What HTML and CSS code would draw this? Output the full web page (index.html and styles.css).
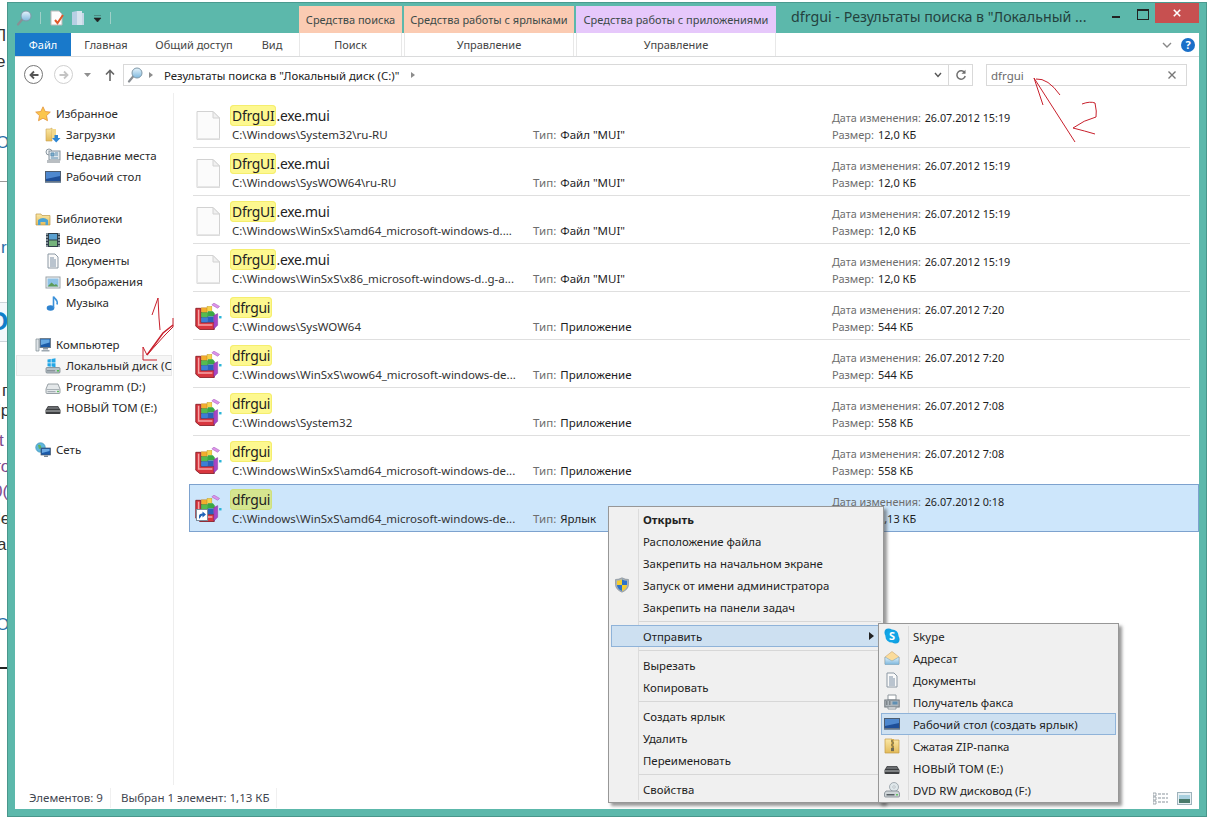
FILE: index.html
```html
<!DOCTYPE html>
<html lang="ru">
<head>
<meta charset="utf-8">
<title>dfrgui</title>
<link rel="stylesheet" href="styles.css">
</head>
<body>
<svg class="defs" width="0" height="0">
  <defs>
    <linearGradient id="gb" x1="0" y1="0" x2="0" y2="1"><stop offset="0" stop-color="#e6f4fc"/><stop offset="1" stop-color="#7db7dd"/></linearGradient>
    <linearGradient id="gf" x1="0" y1="0" x2="0" y2="1"><stop offset="0" stop-color="#fbe8a6"/><stop offset="1" stop-color="#e3bb5a"/></linearGradient>
    <symbol id="i-mag" viewBox="0 0 16 16"><path d="M6.500 9 2 14.500" stroke="#8a8f94" stroke-width="2.200" stroke-linecap="round"/><circle cx="10" cy="6" r="5" fill="url(#gb)" stroke="#7f98a8"/></symbol>
    <symbol id="i-qdoc" viewBox="0 0 16 16"><path d="M2 1h8l3 3v11H2z" fill="#fdfdfd" stroke="#b9b9b9"/><path d="M6 10l2.500 3L14 5" fill="none" stroke="#e0592a" stroke-width="2"/></symbol>
    <symbol id="i-qfold" viewBox="0 0 16 16"><path d="M2 2l5-1v14H2z" fill="#b7cfe4"/><path d="M7 1h5v14H7z" fill="#d7e4ef"/><path d="M12 3h2v12h-2z" fill="#c5d6e6"/></symbol>
    <symbol id="i-star" viewBox="0 0 16 16"><path d="M8 .8l2.200 4.700 5.100.6-3.800 3.500 1 5.100L8 12.200l-4.500 2.500 1-5.100L.7 6.100l5.100-.6z" fill="#fbc64e" stroke="#e2923a" stroke-width=".8"/></symbol>
    <symbol id="i-dl" viewBox="0 0 16 16"><path d="M1 2h4l2-1v13H1z" fill="url(#gf)" stroke="#c9a150" stroke-width=".6"/><path d="M7 2h4v9H7z" fill="#f3d98b"/><path d="M9.500 8h3.500v3h2.500l-4.300 4.500L7 11h2.500z" fill="#2d86d3"/></symbol>
    <symbol id="i-rec" viewBox="0 0 16 16"><circle cx="4" cy="4" r="3" fill="#f2f5f7" stroke="#8c98a1"/><rect x="4" y="3" width="11" height="9" fill="#dfe7ec" stroke="#87949d"/><path d="M6 5h3v3H6zM10 5h3M10 7h3M6 10h7" stroke="#5f90b2" fill="#7fb0d0"/><path d="M2 12h13v3H2z" fill="#b9bec2"/></symbol>
    <symbol id="i-desk" viewBox="0 0 16 16"><rect x=".5" y="2.500" width="15" height="10" fill="#1e4f99" stroke="#4d5d70"/><path d="M1 3h14v4L1 10z" fill="#4e88cf"/><path d="M0 12.500h16v1.500H0z" fill="#7c8fa3"/></symbol>
    <symbol id="i-lib" viewBox="0 0 16 16"><path d="M1 3h5l1 1.500h8V14H1z" fill="url(#gf)" stroke="#bd9a4c" stroke-width=".7"/><path d="M3 14V9q5-4 10 0v5h-2.500v-3h-5v3z" fill="#4aa3d4"/></symbol>
    <symbol id="i-vid" viewBox="0 0 16 16"><rect x="1" y="1" width="14" height="14" fill="#2f3e4a"/><path d="M1 2h2M1 5h2M1 8h2M1 11h2M1 14h2M13 2h2M13 5h2M13 8h2M13 11h2M13 14h2" stroke="#dce3e8"/><rect x="4" y="2" width="8" height="5.500" fill="#5aa0d0"/><rect x="4" y="8.500" width="8" height="5.500" fill="#75b37c"/></symbol>
    <symbol id="i-docs" viewBox="0 0 16 16"><path d="M3 1h7l3 3v11H3z" fill="#fafafa" stroke="#8c98a3"/><path d="M5 5h4M5 7h6M5 9h6M5 11h6M5 13h6" stroke="#7a8ea3"/></symbol>
    <symbol id="i-img" viewBox="0 0 16 16"><rect x="1" y="3" width="14" height="11" fill="#f4f4f4" stroke="#9aa3aa"/><rect x="2.500" y="4.500" width="11" height="8" fill="#8ec2e6"/><path d="M2.500 12.500l4-4 3 2.500 1.500-1 2.500 2.500z" fill="#5d9b58"/></symbol>
    <symbol id="i-mus" viewBox="0 0 16 16"><ellipse cx="5.500" cy="13" rx="3.800" ry="2.800" fill="#2f83cf"/><path d="M8.500 13V1.500c1 2.500 5 3 3.500 8" fill="none" stroke="#3d92da" stroke-width="1.600"/></symbol>
    <symbol id="i-comp" viewBox="0 0 16 16"><rect x="5" y="1.500" width="10.500" height="9" fill="#1c5ca8" stroke="#70808f"/><path d="M6 2.500h8.500v3L6 8z" fill="#67a9e2"/><rect x="8" y="11" width="5" height="1.500" fill="#8d99a3"/><path d="M1 2h3v12H1z" fill="#dfe4e8" stroke="#7d8991" stroke-width=".7"/><path d="M6.500 13h8v1.500h-8z" fill="#9ea8b0"/></symbol>
    <symbol id="i-c" viewBox="0 0 16 16"><path d="M1 10.500q0-1 1-1h12q1 0 1 1v3.500q0 1-1 1H2q-1 0-1-1z" fill="#b9c3c9" stroke="#6f7a82" stroke-width=".7"/><path d="M2 12h8v1.500H2z" fill="#8a949b"/><rect x="12" y="12" width="2" height="1.500" fill="#4bc34b"/><path d="M2.500 1.500l3.300-.5v3.500H2.500zM6.500 1l4-.7v4.200h-4zM2.500 5.200h3.300v3.500l-3.300-.5zM6.500 5.200h4v4l-4-.6z" fill="#22a6e6"/></symbol>
    <symbol id="i-d" viewBox="0 0 16 16"><path d="M3 5h10l2 5v3.500q0 1-1 1H2q-1 0-1-1V10z" fill="#e4e8ea" stroke="#848d93" stroke-width=".8"/><path d="M1.500 10.500h13" stroke="#a9b1b6"/><path d="M2.500 12h8v1.200h-8z" fill="#a5aeb4"/><rect x="12" y="11.800" width="2" height="1.400" fill="#5fc25f"/></symbol>
    <symbol id="i-e" viewBox="0 0 16 16"><path d="M3 6h10l2.500 4v3q0 1-1 1H1.500q-1 0-1-1v-3z" fill="#3d3f41"/><path d="M1 11h14" stroke="#bfc3c5"/><path d="M3.500 6.500h9L14 9H2z" fill="#6a6d70"/></symbol>
    <symbol id="i-net" viewBox="0 0 16 16"><circle cx="5.500" cy="5.500" r="4.800" fill="#5fb6dc" stroke="#3a8fb5" stroke-width=".6"/><path d="M3 3q2-1 3 1t-2 3zM7 8q2-1 2.500 1" fill="#64b35a"/><rect x="6" y="6" width="9.500" height="7" fill="#1b5aa9" stroke="#47586a" stroke-width=".7"/><path d="M7 7h7.500v2L7 11z" fill="#6aa9e4"/><path d="M9 13.500h4V15H9z" fill="#7e8a94"/></symbol>
    <symbol id="i-file" viewBox="0 0 24 29"><path d="M1 .5h16l6.500 6.500v21.500H1z" fill="#fbfbfb" stroke="#d2d2d2"/><path d="M17 .5V7h6.500z" fill="#f0f0f0" stroke="#d2d2d2"/><path d="M1 27h22.500v1.500H1z" fill="#e6e6e6"/></symbol>
    <symbol id="i-defrag" viewBox="0 0 28 28">
      <path d="M.8 5.500h5.200V20h14v7.500H5L.8 24z" fill="#d8363f" stroke="#7c1018" stroke-width=".8"/>
      <path d="M3 7h1.500v15H18v1.500H3z" fill="#f6a4a6"/>
      <rect x="6.500" y="5" width="6" height="5" fill="#f3ad2d" stroke="#b77c15" stroke-width=".4"/><rect x="12.500" y="3.500" width="5" height="5" fill="#f7d24a" stroke="#b9961f" stroke-width=".4"/>
      <rect x="6.500" y="10" width="7" height="5" fill="#55bc50" stroke="#2d7d2a" stroke-width=".4"/><path d="M13.500 8.500h5l2 2.500v3h-7z" fill="#3aa845"/>
      <rect x="6.500" y="15" width="6.500" height="5" fill="#3a7fd8" stroke="#1f4f95" stroke-width=".4"/><rect x="13" y="14" width="6.500" height="6" fill="#2a62bb"/>
      <path d="M19.500 13l4-2v12l-4 4z" fill="#a845c6" stroke="#6e2a85" stroke-width=".4"/>
      <path d="M17.500 2l2-2 6 3.500-2 2z" fill="#dc93ea" stroke="#9c52b3" stroke-width=".5"/><rect x="25" y="13.500" width="2.500" height="2.500" fill="#2ab5d8"/>
    </symbol>
    <symbol id="i-lnk" viewBox="0 0 12 12"><rect x=".5" y=".5" width="11" height="11" fill="#fff" stroke="#7d8b99"/><path d="M3 10V7q0-2.500 3.500-2.500V2.500L10 5.500 6.500 8.500v-2Q5 6.500 4.800 8z" fill="#1d62b8"/></symbol>
    <symbol id="i-shield" viewBox="0 0 16 16"><path d="M8 .8q3 1.700 6.500 1.700v5q0 5-6.500 7.700Q1.500 12.500 1.500 7.500v-5Q5 2.500 8 .8z" fill="#aab3bb" stroke="#7b858d" stroke-width=".6"/><path d="M8 2.500q2.500 1.200 5 1.300V8H8zM8 8v6q-4.700-2-5-6z" fill="#2d72c9"/><path d="M8 2.500V8H3V3.800q2.500-.1 5-1.300zM8 8h5q-.3 4-5 6z" fill="#f4cc2f"/></symbol>
    <symbol id="i-skype" viewBox="0 0 16 16"><circle cx="4.500" cy="4.500" r="4" fill="#0f9fe0"/><circle cx="11.500" cy="11.500" r="4" fill="#0f9fe0"/><circle cx="8" cy="8" r="6.600" fill="#12a5e6"/><text x="8" y="12" text-anchor="middle" class="skype-s">S</text></symbol>
    <symbol id="i-mail" viewBox="0 0 16 16"><path d="M1 7l7-5.500L15 7v7H1z" fill="#fbdc9b" stroke="#c9a670" stroke-width=".6"/><path d="M1 7l7 4 7-4v7.500H1z" fill="url(#gb)" stroke="#7ba6c4" stroke-width=".6"/></symbol>
    <symbol id="i-fax" viewBox="0 0 16 16"><path d="M4 1h8v5H4z" fill="#fff" stroke="#8f979d"/><rect x=".8" y="6" width="14.400" height="7" fill="#aeb6bc" stroke="#6f777d"/><path d="M2 8h1.500M2 10h1.500M5 8h1.500M5 10h1.500" stroke="#4c545a"/><rect x="8.500" y="7.500" width="5" height="3" fill="#5f8fb3"/><path d="M4 13h8v2H4z" fill="#fff" stroke="#8f979d"/></symbol>
    <symbol id="i-zip" viewBox="0 0 16 16"><path d="M1 1h7l1 1h6v13H1z" fill="url(#gf)" stroke="#c49b45" stroke-width=".7"/><path d="M7 1h3v14H7z" fill="#d6b052"/><path d="M8 2v2M9 4v2M8 6v2M9 8v2" stroke="#5f5a44"/><rect x="7" y="10" width="3" height="3" fill="#6e6a55"/></symbol>
    <symbol id="i-dvd" viewBox="0 0 16 16"><circle cx="10" cy="5" r="4.500" fill="#dfe7ea" stroke="#85919a" stroke-width=".7"/><circle cx="10" cy="5" r="1.200" fill="#fff" stroke="#85919a" stroke-width=".5"/><path d="M2 9h12l1.500 2v3q0 1-1 1h-13q-1 0-1-1v-3z" fill="#cfd5d8" stroke="#6f7a82" stroke-width=".7"/><path d="M2.500 12h8v1.500h-8z" fill="#555d63"/><rect x="12" y="12" width="2" height="1.500" fill="#63c563"/></symbol>
  </defs>
</svg>

<div class="stage">
  <div class="behind">
    <span class="frag f1">Л</span>
    <span class="frag f2">е</span>
    <span class="frag f3 link">От</span>
    <span class="rule r1"></span>
    <span class="frag f4 link">r</span>
    <span class="bluebox"><span class="big-o">О</span></span>
    <span class="frag f5">г</span>
    <span class="frag f6">lp</span>
    <span class="frag f7 visited">t</span>
    <span class="frag f8 visited">го</span>
    <span class="frag f9 visited">0(</span>
    <span class="frag f10">le</span>
    <span class="frag f11">а</span>
    <span class="frag f12 link">От</span>
    <span class="rule r2"></span>
  </div>

  <div class="window">
    <header class="titlebar">
      <div class="qat">
        <svg class="ico16 qat-mag"><use href="#i-mag"/></svg>
        <i class="qat-sep"></i>
        <svg class="ico16"><use href="#i-qdoc"/></svg>
        <svg class="ico16"><use href="#i-qfold"/></svg>
        <svg class="qat-drop" viewBox="0 0 9 7"><path d="M1 0h7M1 3h7l-3.500 4z" fill="#222" stroke="#222" stroke-width=".6"/></svg>
        <i class="qat-sep"></i>
      </div>
      <div class="ctx-heads">
        <span class="ctx-head search">Средства поиска</span>
        <span class="ctx-head shortcut">Средства работы с ярлыками</span>
        <span class="ctx-head app">Средства работы с приложениями</span>
      </div>
      <div class="win-title">dfrgui - Результаты поиска в "Локальный ...</div>
      <div class="win-btns">
        <span class="wb wb-min"></span>
        <span class="wb wb-max"></span>
        <span class="wb wb-close"><svg viewBox="0 0 10 10" class="wb-x"><path d="M1 1l8 8M9 1l-8 8" stroke="#fff" stroke-width="2"/></svg></span>
      </div>
    </header>

    <nav class="ribbon">
      <span class="tab-file">Файл</span>
      <span class="tab t-home">Главная</span>
      <span class="tab t-share">Общий доступ</span>
      <span class="tab t-view">Вид</span>
      <span class="tab ctx t-search">Поиск</span>
      <span class="tab ctx t-short">Управление</span>
      <span class="tab ctx t-app">Управление</span>
      <span class="ribbon-end">
        <svg class="chev" viewBox="0 0 10 6"><path d="M1 1l4 4 4-4" fill="none" stroke="#888" stroke-width="1.400"/></svg>
        <span class="help">?</span>
      </span>
    </nav>

    <div class="navbar">
      <span class="round active"><svg viewBox="0 0 12 12"><path d="M10.500 6H2.500M6 2.500L2.500 6 6 9.500" fill="none" stroke="#555" stroke-width="1.800"/></svg></span>
      <span class="round"><svg viewBox="0 0 12 12"><path d="M1.500 6h8M6 2.500L9.500 6 6 9.500" fill="none" stroke="#c4c4c4" stroke-width="1.800"/></svg></span>
      <svg class="nav-drop" viewBox="0 0 7 4"><path d="M0 0h7L3.500 4z" fill="#8f8f8f"/></svg>
      <svg class="nav-up" viewBox="0 0 10 12"><path d="M5 12V1.500M1 5.500l4-4 4 4" fill="none" stroke="#666" stroke-width="1.600"/></svg>
      <div class="addr">
        <svg class="ico16 addr-mag"><use href="#i-mag"/></svg>
        <i class="tri"></i>
        <span class="addr-text">Результаты поиска в "Локальный диск (C:)"</span>
        <i class="tri"></i>
        <span class="addr-space"></span>
        <svg class="addr-chev" viewBox="0 0 8 6"><path d="M1 1l3 3.500L7 1" fill="none" stroke="#555" stroke-width="1.400"/></svg>
        <span class="addr-refresh"><svg viewBox="0 0 12 12"><path d="M9.800 4A4.200 4.200 0 1 0 10.200 7" fill="none" stroke="#6f6f6f" stroke-width="1.500"/><path d="M10.500 .8v4h-4z" fill="#6f6f6f"/></svg></span>
      </div>
      <div class="searchbox">
        <span>dfrgui</span>
        <svg viewBox="0 0 8 8"><path d="M.5.500l7 7M7.500.500l-7 7" stroke="#777" stroke-width="1.400"/></svg>
      </div>
    </div>

    <main class="main">
      <aside class="pane">
        <div class="group">
          <div class="pi top"><svg class="ico16"><use href="#i-star"/></svg><span>Избранное</span></div>
          <div class="pi sub"><svg class="ico16"><use href="#i-dl"/></svg><span>Загрузки</span></div>
          <div class="pi sub"><svg class="ico16"><use href="#i-rec"/></svg><span>Недавние места</span></div>
          <div class="pi sub"><svg class="ico16"><use href="#i-desk"/></svg><span>Рабочий стол</span></div>
        </div>
        <div class="group">
          <div class="pi top"><svg class="ico16"><use href="#i-lib"/></svg><span>Библиотеки</span></div>
          <div class="pi sub"><svg class="ico16"><use href="#i-vid"/></svg><span>Видео</span></div>
          <div class="pi sub"><svg class="ico16"><use href="#i-docs"/></svg><span>Документы</span></div>
          <div class="pi sub"><svg class="ico16"><use href="#i-img"/></svg><span>Изображения</span></div>
          <div class="pi sub"><svg class="ico16"><use href="#i-mus"/></svg><span>Музыка</span></div>
        </div>
        <div class="group">
          <div class="pi top"><svg class="ico16"><use href="#i-comp"/></svg><span>Компьютер</span></div>
          <div class="pi sub sel"><svg class="ico16"><use href="#i-c"/></svg><span>Локальный диск (C:)</span></div>
          <div class="pi sub"><svg class="ico16"><use href="#i-d"/></svg><span>Programm (D:)</span></div>
          <div class="pi sub"><svg class="ico16"><use href="#i-e"/></svg><span>НОВЫЙ ТОМ (E:)</span></div>
        </div>
        <div class="group">
          <div class="pi top"><svg class="ico16"><use href="#i-net"/></svg><span>Сеть</span></div>
        </div>
      </aside>

      <section class="list">
        <article class="row">
          <svg class="ficon doc"><use href="#i-file"/></svg>
          <div class="fname"><mark>DfrgUI</mark>.exe.mui</div>
          <div class="fpath">C:\Windows\System32\ru-RU</div>
          <div class="ftype"><span class="lbl">Тип:</span> Файл "MUI"</div>
          <div class="fdate"><span class="lbl">Дата изменения:</span> 26.07.2012 15:19</div>
          <div class="fsize"><span class="lbl">Размер:</span> 12,0 КБ</div>
        </article>
        <hr class="sep">
        <article class="row">
          <svg class="ficon doc"><use href="#i-file"/></svg>
          <div class="fname"><mark>DfrgUI</mark>.exe.mui</div>
          <div class="fpath">C:\Windows\SysWOW64\ru-RU</div>
          <div class="ftype"><span class="lbl">Тип:</span> Файл "MUI"</div>
          <div class="fdate"><span class="lbl">Дата изменения:</span> 26.07.2012 15:19</div>
          <div class="fsize"><span class="lbl">Размер:</span> 12,0 КБ</div>
        </article>
        <hr class="sep">
        <article class="row">
          <svg class="ficon doc"><use href="#i-file"/></svg>
          <div class="fname"><mark>DfrgUI</mark>.exe.mui</div>
          <div class="fpath">C:\Windows\WinSxS\amd64_microsoft-windows-d....</div>
          <div class="ftype"><span class="lbl">Тип:</span> Файл "MUI"</div>
          <div class="fdate"><span class="lbl">Дата изменения:</span> 26.07.2012 15:19</div>
          <div class="fsize"><span class="lbl">Размер:</span> 12,0 КБ</div>
        </article>
        <hr class="sep">
        <article class="row">
          <svg class="ficon doc"><use href="#i-file"/></svg>
          <div class="fname"><mark>DfrgUI</mark>.exe.mui</div>
          <div class="fpath">C:\Windows\WinSxS\x86_microsoft-windows-d..g-a...</div>
          <div class="ftype"><span class="lbl">Тип:</span> Файл "MUI"</div>
          <div class="fdate"><span class="lbl">Дата изменения:</span> 26.07.2012 15:19</div>
          <div class="fsize"><span class="lbl">Размер:</span> 12,0 КБ</div>
        </article>
        <hr class="sep">
        <article class="row">
          <svg class="ficon app"><use href="#i-defrag"/></svg>
          <div class="fname"><mark>dfrgui</mark></div>
          <div class="fpath">C:\Windows\SysWOW64</div>
          <div class="ftype"><span class="lbl">Тип:</span> Приложение</div>
          <div class="fdate"><span class="lbl">Дата изменения:</span> 26.07.2012 7:20</div>
          <div class="fsize"><span class="lbl">Размер:</span> 544 КБ</div>
        </article>
        <hr class="sep">
        <article class="row">
          <svg class="ficon app"><use href="#i-defrag"/></svg>
          <div class="fname"><mark>dfrgui</mark></div>
          <div class="fpath">C:\Windows\WinSxS\wow64_microsoft-windows-de...</div>
          <div class="ftype"><span class="lbl">Тип:</span> Приложение</div>
          <div class="fdate"><span class="lbl">Дата изменения:</span> 26.07.2012 7:20</div>
          <div class="fsize"><span class="lbl">Размер:</span> 544 КБ</div>
        </article>
        <hr class="sep">
        <article class="row">
          <svg class="ficon app"><use href="#i-defrag"/></svg>
          <div class="fname"><mark>dfrgui</mark></div>
          <div class="fpath">C:\Windows\System32</div>
          <div class="ftype"><span class="lbl">Тип:</span> Приложение</div>
          <div class="fdate"><span class="lbl">Дата изменения:</span> 26.07.2012 7:08</div>
          <div class="fsize"><span class="lbl">Размер:</span> 558 КБ</div>
        </article>
        <hr class="sep">
        <article class="row">
          <svg class="ficon app"><use href="#i-defrag"/></svg>
          <div class="fname"><mark>dfrgui</mark></div>
          <div class="fpath">C:\Windows\WinSxS\amd64_microsoft-windows-de...</div>
          <div class="ftype"><span class="lbl">Тип:</span> Приложение</div>
          <div class="fdate"><span class="lbl">Дата изменения:</span> 26.07.2012 7:08</div>
          <div class="fsize"><span class="lbl">Размер:</span> 558 КБ</div>
        </article>
        <article class="row selected">
          <div class="ficon-wrap">
            <svg class="ficon app"><use href="#i-defrag"/></svg>
            <svg class="lnk"><use href="#i-lnk"/></svg>
          </div>
          <div class="fname"><mark>dfrgui</mark></div>
          <div class="fpath">C:\Windows\WinSxS\amd64_microsoft-windows-de...</div>
          <div class="ftype"><span class="lbl">Тип:</span> Ярлык</div>
          <div class="fdate"><span class="lbl">Дата изменения:</span> 26.07.2012 0:18</div>
          <div class="fsize"><span class="lbl">Размер:</span> 1,13 КБ</div>
        </article>
      </section>
    </main>

    <footer class="status">
      <span class="st st1">Элементов: 9</span>
      <span class="st st2">Выбран 1 элемент: 1,13 КБ</span>
      <span class="st-views">
        <svg class="v-list" viewBox="0 0 15 13"><path d="M0 1h3v3H0zM0 5h3v3H0zM0 9h3v3H0z" fill="none" stroke="#8a949c" stroke-width=".8"/><path d="M5 2h10M5 6h10M5 10h10" stroke="#8a949c" stroke-width="1.200" stroke-dasharray="3 1"/></svg>
        <svg class="v-big" viewBox="0 0 15 13"><rect x=".5" y=".5" width="14" height="12" fill="#e6f0f3" stroke="#9db2bb"/><path d="M2 3h11v4H2z" fill="#a8d0df"/><path d="M2 7h11v4H2z" fill="#4a7a6b"/></svg>
      </span>
    </footer>
  </div>

  <div class="menu main-menu">
    <div class="mi strong"><span class="mi-ic"></span>Открыть</div>
    <div class="mi"><span class="mi-ic"></span>Расположение файла</div>
    <div class="mi"><span class="mi-ic"></span>Закрепить на начальном экране</div>
    <div class="mi"><span class="mi-ic"><svg class="ico16"><use href="#i-shield"/></svg></span>Запуск от имени администратора</div>
    <div class="mi"><span class="mi-ic"></span>Закрепить на панели задач</div>
    <div class="ms"></div>
    <div class="mi hot"><span class="mi-ic"></span>Отправить<i class="mi-arrow"></i></div>
    <div class="ms"></div>
    <div class="mi"><span class="mi-ic"></span>Вырезать</div>
    <div class="mi"><span class="mi-ic"></span>Копировать</div>
    <div class="ms"></div>
    <div class="mi"><span class="mi-ic"></span>Создать ярлык</div>
    <div class="mi"><span class="mi-ic"></span>Удалить</div>
    <div class="mi"><span class="mi-ic"></span>Переименовать</div>
    <div class="ms"></div>
    <div class="mi"><span class="mi-ic"></span>Свойства</div>
  </div>

  <div class="menu sub-menu">
    <div class="mi"><span class="mi-ic"><svg class="ico16"><use href="#i-skype"/></svg></span>Skype</div>
    <div class="mi"><span class="mi-ic"><svg class="ico16"><use href="#i-mail"/></svg></span>Адресат</div>
    <div class="mi"><span class="mi-ic"><svg class="ico16"><use href="#i-docs"/></svg></span>Документы</div>
    <div class="mi"><span class="mi-ic"><svg class="ico16"><use href="#i-fax"/></svg></span>Получатель факса</div>
    <div class="mi hot"><span class="mi-ic"><svg class="ico16"><use href="#i-desk"/></svg></span>Рабочий стол (создать ярлык)</div>
    <div class="mi"><span class="mi-ic"><svg class="ico16"><use href="#i-zip"/></svg></span>Сжатая ZIP-папка</div>
    <div class="mi"><span class="mi-ic"><svg class="ico16"><use href="#i-e"/></svg></span>НОВЫЙ ТОМ (E:)</div>
    <div class="mi"><span class="mi-ic"><svg class="ico16"><use href="#i-dvd"/></svg></span>DVD RW дисковод (F:)</div>
  </div>

  <svg class="ink" viewBox="0 0 1217 825">
    <g fill="none" stroke="#c8202c" stroke-width="1">
      <path d="M152 315l6-17 1 20 1 12"/>
      <path d="M173 318v9l-8 8-18 20"/>
      <path d="M173 325l-10 8-16 22" stroke-width="1.500"/>
      <path d="M147 355l-4-8v13h14"/>
      <path d="M1034 78l41 64"/>
      <path d="M1034 78l9 27"/>
      <path d="M1036 79q12-1 24 16"/>
      <path d="M1082 104q8-3 13-1 2 9 1 14-12 3-23 11 12 3 22 6"/>
    </g>
  </svg>
</div>
</body>
</html>
```
FILE: styles.css
```css
* { box-sizing: border-box; }
html, body { margin: 0; padding: 0; background: #fff; }
body { font-family: "Noto Sans", "Open Sans", sans-serif; font-size: 11.5px; color: #1e1e1e; overflow: hidden; }
.defs { position: absolute; }
.skype-s { font: 700 11px "Noto Sans", sans-serif; fill: #fff; }
.stage { position: relative; width: 1217px; height: 825px; overflow: hidden; background: #fff; }

/* page visible behind the window */
.behind { position: absolute; inset: 0 auto 0 0; width: 8px; overflow: hidden; font-family: "Liberation Sans", sans-serif; font-size: 17px; color: #333; }
.frag { position: absolute; left: 0; line-height: 20px; white-space: nowrap; }
.f1 { top: 26px; left: -5px; }
.f2 { top: 52px; left: -4px; }
.f3 { top: 133px; left: -4px; }
.f4 { top: 238px; left: 1px; }
.f5 { top: 381px; left: 2px; }
.f6 { top: 401px; left: -3px; }
.f7 { top: 431px; left: -1px; }
.f8 { top: 457px; left: -5px; }
.f9 { top: 482px; left: -7px; }
.f10 { top: 509px; left: -3px; }
.f11 { top: 535px; left: -3px; }
.f12 { top: 615px; left: -4px; }
.link { color: #2a6ea8; }
.visited { color: #7d4a8e; }
.rule { position: absolute; left: 0; width: 8px; }
.r1 { top: 181px; height: 1px; background: #999; }
.r2 { top: 667px; height: 2px; background: #222; }
.bluebox { position: absolute; left: 0; top: 302px; width: 8px; height: 40px; background: #f3f8fc; border-top: 1px solid #cdd5db; border-bottom: 1px solid #cdd5db; overflow: hidden; }
.big-o { position: absolute; left: -12px; top: 2px; font: 700 26px/32px "Liberation Sans", sans-serif; color: #0f7ec8; }

/* window */
.window { position: absolute; left: 7px; top: 2px; width: 1200px; height: 815px; background: #5cb8ab; border-top: 1px solid #4a9a8f; padding: 0 8px 8px; display: flex; flex-direction: column; box-shadow: inset 1px 0 0 #49968b, inset -1px 0 0 #49968b, inset 0 -1px 0 #49968b; }
.titlebar { height: 30px; flex: none; display: flex; align-items: flex-start; position: relative; }
.qat { width: 284px; height: 30px; display: flex; align-items: center; gap: 5px; padding-left: 1px; flex: none; }
.qat-sep { width: 1px; height: 12px; background: #9fd0c8; margin: 0 3px; }
.qat-drop { width: 9px; height: 7px; margin-left: 2px; }
.ctx-heads { display: flex; gap: 2px; padding-top: 3px; flex: none; width: 477px; }
.ctx-head { height: 27px; display: flex; align-items: center; justify-content: center; font-size: 11px; color: #3b4a48; }
.ctx-head.search { width: 103px; background: #fbcbb2; }
.ctx-head.shortcut { width: 170px; background: #fbcbb2; }
.ctx-head.app { width: 200px; background: #e6c8fb; }
.win-title { flex: none; width: 340px; padding: 2px 0 0 15px; font-size: 14.25px; line-height: 24px; color: #24423e; white-space: nowrap; }
.win-btns { position: absolute; right: 0; top: 0; display: flex; align-items: flex-start; }
.wb { display: block; height: 20px; }
.wb-min { width: 13px; position: relative; margin-right: 12px; }
.wb-min::after { content: ""; position: absolute; left: 1px; top: 13px; width: 8px; height: 2px; background: #222; }
.wb-max { width: 13px; margin-right: 6px; position: relative; }
.wb-max::after { content: ""; position: absolute; left: 1px; top: 6px; width: 10px; height: 8px; border: 1px solid #222; border-top-width: 2px; }
.wb-close { width: 44px; height: 20px; background: #c75050; display: flex; align-items: center; justify-content: center; }
.wb-x { width: 8px; height: 8px; }

.ribbon { flex: none; height: 24px; background: #fff; border-bottom: 1px solid #dadbdc; display: flex; align-items: stretch; position: relative; color: #444; font-size: 11px; }
.tab-file { width: 56px; background: #1979ca; color: #fff; display: flex; align-items: center; justify-content: center; }
.tab { display: flex; align-items: center; justify-content: center; flex: none; }
.t-home { width: 70px; }
.t-share { width: 106px; }
.t-view { width: 50px; }
.t-search { width: 103px; margin-left: 2px; }
.t-short { width: 170px; margin-left: 2px; }
.t-app { width: 200px; margin-left: 2px; }
.tab.ctx { border-left: 1px solid #e8e8e8; border-right: 1px solid #e8e8e8; }
.ribbon-end { margin-left: auto; display: flex; align-items: center; gap: 9px; padding-right: 4px; }
.chev { width: 10px; height: 6px; }
.help { width: 14px; height: 14px; border-radius: 50%; background: #1a6fc8; color: #fff; font-weight: 700; font-size: 11px; line-height: 14px; text-align: center; }

.navbar { flex: none; height: 36px; background: #fff; display: flex; align-items: flex-start; padding: 7px 0 0 9px; }
.round { width: 19px; height: 19px; margin-top: 1px; border-radius: 50%; border: 1px solid #d0d0d0; display: flex; align-items: center; justify-content: center; margin-right: 11px; flex: none; }
.round.active { border-color: #777; }
.round svg { width: 12px; height: 12px; }
.nav-drop { width: 7px; height: 4px; margin: 9px 14px 0 0; flex: none; }
.nav-up { width: 10px; height: 12px; margin: 5px 8px 0 0; flex: none; }
.addr { width: 850px; height: 22px; flex: none; border: 1px solid #d9d9d9; display: flex; align-items: center; padding-left: 3px; color: #222; }
.addr-mag { width: 15px; height: 15px; }
.tri { width: 0; height: 0; border-left: 4px solid #8c8c8c; border-top: 3px solid transparent; border-bottom: 3px solid transparent; margin: 0 11px 0 6px; flex: none; }
.addr-text { white-space: nowrap; margin-right: 6px; font-size: 11.4px; }
.addr-space { flex: 1; }
.addr-chev { width: 8px; height: 6px; margin-right: 6px; }
.addr-refresh { width: 24px; height: 20px; border-left: 1px solid #d9d9d9; display: flex; align-items: center; justify-content: center; }
.addr-refresh svg { width: 12px; height: 12px; }
.searchbox { width: 201px; height: 22px; flex: none; margin-left: 13px; border: 1px solid #d9d9d9; display: flex; align-items: center; justify-content: space-between; padding: 0 10px 0 4px; color: #6a6a6a; }
.searchbox svg { width: 8px; height: 8px; }

.main { flex: 1; min-height: 0; display: flex; background: #fff; }
.pane { width: 159px; flex: none; border-right: 1px solid #eeeeee; padding-top: 10px; display: flex; flex-direction: column; gap: 21px; overflow: hidden; }
.pi { height: 21px; display: flex; align-items: center; white-space: nowrap; color: #2b2b2b; overflow: hidden; }
.pi .ico16 { margin-right: 5px; }
.pi.top { padding-left: 20px; }
.pi.sub { padding-left: 30px; }
.pi.sel { margin: 0 1px; padding-left: 29px; background: #f6f6f6; box-shadow: inset 0 0 0 1px #e8e8e8; }
.ico16 { width: 16px; height: 16px; flex: none; display: block; }

.list { flex: 1; min-width: 0; padding: 7px 0 0 15px; display: flex; flex-direction: column; }
.row { flex: none; height: 47px; padding: 5px 0 0 0; display: grid; grid-template-columns: 41px 303px 299px 1fr; grid-template-rows: 21px 17px; }
.row.selected { height: 48px; margin-top: 1px; background: #cde6fb; box-shadow: inset 0 0 0 1px #7da2ce; }
.sep { flex: none; height: 1px; margin: 0 9px 0 4px; border: 0; background: #dfdfdf; }
.ficon { grid-row: 1 / 3; grid-column: 1; }
.ficon.doc { width: 24px; height: 29px; margin: 6px 0 0 7px; }
.ficon.app { width: 27px; height: 27px; margin: 6px 0 0 6px; }
.ficon-wrap { grid-row: 1 / 3; grid-column: 1; position: relative; }
.lnk { position: absolute; left: 7px; top: 20px; width: 12px; height: 12px; }
.fname { grid-column: 2; grid-row: 1; font-size: 13.9px; letter-spacing: -.25px; line-height: 21px; color: #222; white-space: nowrap; }
mark { display: inline-block; height: 21px; padding: 0 2px; color: inherit; background: #fdf88f; border-radius: 4px; box-shadow: inset 0 0 0 1px #f5ee6e; }
.selected mark { background: #d5e58f; box-shadow: inset 0 0 0 1px #cfe07d; }
.fpath { grid-column: 2; grid-row: 2; padding: 1px 0 0 2px; line-height: 16px; white-space: nowrap; overflow: hidden; color: #333; }
.ftype { grid-column: 3; grid-row: 2; padding-top: 1px; line-height: 16px; white-space: nowrap; }
.fdate { grid-column: 4; grid-row: 1; align-self: end; line-height: 16px; white-space: nowrap; font-size: 10.8px; }
.fsize { grid-column: 4; grid-row: 2; line-height: 16px; white-space: nowrap; padding-top: 1px; font-size: 11px; }
.lbl { color: #6d6d6d; margin-right: 1px; }

.status { flex: none; height: 24px; padding-top: 2px; background: #fff; display: flex; align-items: center; color: #3f4650; }
.st1 { padding-left: 14px; width: 96px; border-right: 1px solid #f0f0f0; height: 20px; line-height: 20px; }
.st2 { padding-left: 10px; width: 166px; height: 20px; line-height: 20px; border-right: 1px solid #f0f0f0; white-space: nowrap; }
.st-views { margin-left: auto; display: flex; gap: 9px; padding-right: 7px; }
.v-list, .v-big { width: 15px; height: 13px; display: block; }

/* context menus */
.menu { position: absolute; background: #f0f0f0; border: 1px solid #979797; box-shadow: 3px 3px 3px rgba(70,70,70,.55); padding: 1px 2px 2px; font-size: 11.4px; }
.menu::before { content: ""; position: absolute; left: 29px; top: 2px; bottom: 2px; width: 1px; background: #dcdcdc; }
.main-menu { left: 608px; top: 506px; width: 276px; height: 297px; z-index: 2; }
.sub-menu { left: 878px; top: 623px; width: 241px; height: 180px; z-index: 3; }
.mi { position: relative; height: 22px; display: flex; align-items: center; color: #222; white-space: nowrap; }
.mi.strong { font-weight: 700; }
.mi-ic { width: 32px; flex: none; display: flex; align-items: center; padding-left: 3px; }
.mi.hot { background: #cde0f1; box-shadow: inset 0 0 0 1px #8fb3d9; }
.mi-arrow { position: absolute; right: 7px; top: 7px; width: 0; height: 0; border-left: 5px solid #222; border-top: 4px solid transparent; border-bottom: 4px solid transparent; }
.ms { position: relative; height: 7px; margin-left: 28px; }
.ms::after { content: ""; position: absolute; left: 0; right: 0; top: 3px; height: 1px; background: #d7d7d7; }

.ink { position: absolute; inset: 0; width: 1217px; height: 825px; z-index: 4; pointer-events: none; }
```
